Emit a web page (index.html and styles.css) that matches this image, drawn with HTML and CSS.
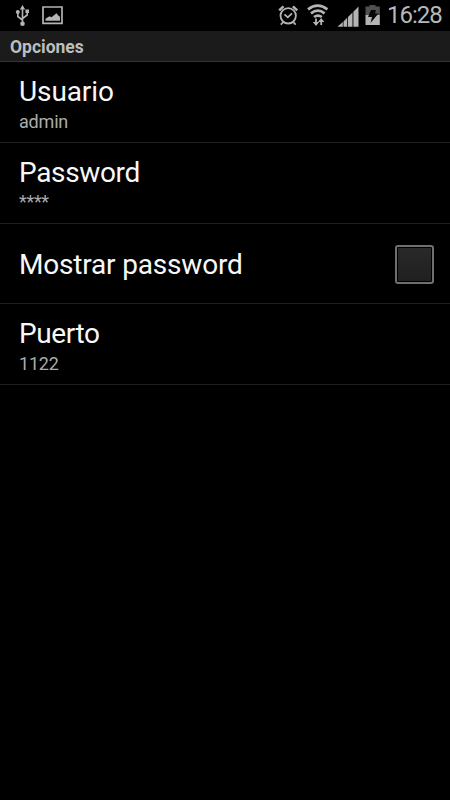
FILE: index.html
```html
<!DOCTYPE html>
<html lang="es">
<head>
<meta charset="utf-8">
<title>Opciones</title>
<link rel="stylesheet" href="styles.css">
</head>
<body>
<header class="status">
  <svg class="icons" width="385" height="31" viewBox="0 0 385 31" fill="none" stroke="#b4b4b4">
    <g stroke-width="1.6">
      <path d="M22.500 8v15M17.800 12v4.500l4.700 3.500M27.200 11v4l-4.700 3.500"/>
      <g fill="#b4b4b4" stroke="none">
        <path d="M22.500 5l2.700 4.500h-5.400zM25.400 9.500h3.600v3.500h-3.600z"/>
        <circle cx="17.800" cy="12" r="2"/>
        <circle cx="22.500" cy="23.700" r="2.300"/>
      </g>
    </g>
    <path stroke-width="1.700" d="M43 7h19v16.300H43z"/>
    <path fill="#b4b4b4" stroke="none" d="M45.500 20.700v-2l4-2.400 2 .9 5-4 2 2.500 1.500 1v4z"/>
    <circle cx="288.200" cy="15.800" r="7.700" stroke-width="1.800"/>
    <path stroke-width="1.800" d="M284.500 14.300l3.300 3 4.200-4M283.300 22l-2.500 2.700M293.200 22l2.500 2.700"/>
    <path stroke-width="2.500" d="M279.200 10.300l4.300-4M292.900 6.300l4.300 4"/>
    <path stroke-width="2.700" d="M308 9.400q9.700-7.600 19.400 0M311 13.400q6.800-5.400 13.600 0M314 17q3.900-2.800 7.800 0"/>
    <path stroke-width="1.800" d="M316 18.500v5M321.200 25v-5"/>
    <path fill="#b4b4b4" stroke="none" d="M312.800 22h6.400L316 26zM318 22h6.400l-3.200-4z"/>
    <path fill="#b4b4b4" stroke="none" d="M337.500 26.700L342.800 22v4.700zM343.500 26.700v-5.300l3.700-3.700v9zM348 26.700V17l4.500-4.500v14.200zM353.400 26.700v-15l5.100-5.200v20.200z"/>
    <path fill="#505050" stroke="none" d="M365.500 6.500h4V5h6v1.500h4.300V15h-14.300z"/>
    <path fill="#b4b4b4" stroke="none" d="M365.500 15h14.300v10h-14.300z"/>
    <path fill="#080808" stroke="none" d="M371 10h5l-1 3.500h3.500l-8 9.500 1.500-6h-4z"/>
  </svg>
  <time class="clock">16:28</time>
</header>
<h1 class="heading">Opciones</h1>
<main>
  <section class="row"><div class="title t-user">Usuario</div><div class="summary">admin</div></section>
  <section class="row"><div class="title t-pass">Password</div><div class="summary masked">****</div></section>
  <section class="row check"><div class="title t-show">Mostrar password</div><span class="box"></span></section>
  <section class="row"><div class="title t-port">Puerto</div><div class="summary">1122</div></section>
</main>
</body>
</html>
```
FILE: styles.css
```css
* { box-sizing: border-box; }
body {
  margin: 0;
  height: 800px;
  background: #000;
  color: #f8f8f8;
  font-family: Roboto, sans-serif;
  overflow: hidden;
}
.status { height: 31px; display: flex; }
.icons { flex: none; }
.clock {
  padding-left: 2px;
  font-size: 24px;
  line-height: 31px;
  letter-spacing: -1px;
  color: #b8b8b8;
  white-space: nowrap;
}
.heading {
  margin: 0;
  height: 31px;
  padding-left: 10px;
  background: #1b1b1b;
  border-bottom: 1px solid #343434;
  color: #bebebe;
  font-size: 17.5px;
  line-height: 32px;
  font-weight: 700;
}
.row {
  height: 80.75px;
  padding: 12px 16px 0 19px;
  border-bottom: 1px solid #1e1e1e;
}
.title { font-size: 28px; line-height: 36px; white-space: nowrap; }
.t-user { letter-spacing: -0.1px; }
.t-pass { letter-spacing: -0.35px; }
.t-show { letter-spacing: -0.18px; }
.t-port { letter-spacing: -0.4px; }
.summary { font-size: 18px; line-height: 23px; letter-spacing: -0.2px; color: #ababab; }
.masked { letter-spacing: -0.3px; line-height: 21px; }
.check {
  display: flex;
  align-items: center;
  justify-content: space-between;
  padding-top: 3px;
}
.box {
  width: 39px;
  height: 39px;
  margin-top: -1px;
  border: 2px solid #707070;
  border-radius: 3px;
  padding: 1px;
  background: linear-gradient(#292929, #202020) content-box;
}
```
